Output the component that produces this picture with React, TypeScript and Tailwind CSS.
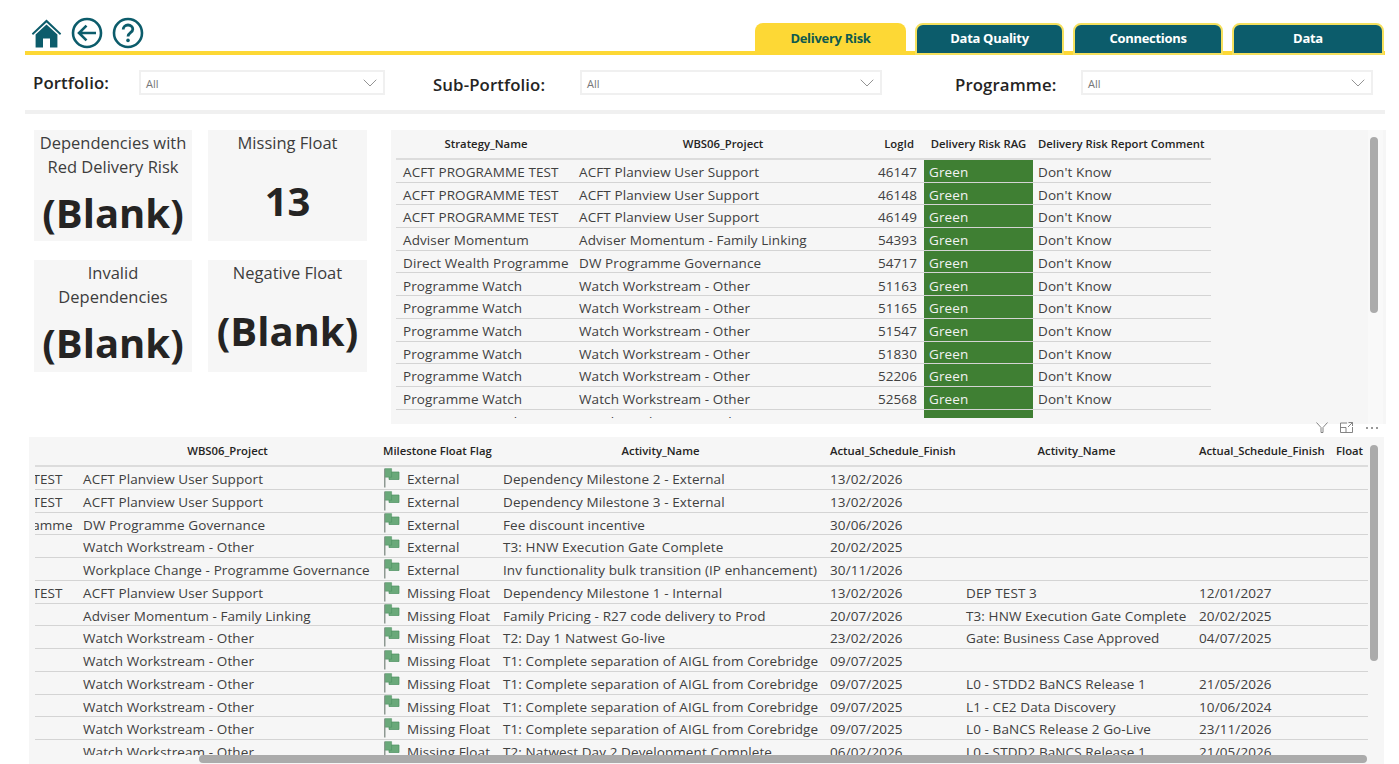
import { ChevronDown } from 'lucide-react'

const SANS = "font-['Open_Sans','Noto_Sans',sans-serif]"

const TABS = [
  { label: 'Delivery Risk', active: true, width: 'w-[151px]' },
  { label: 'Data Quality', active: false, width: 'w-[149px]' },
  { label: 'Connections', active: false, width: 'w-[150px]' },
  { label: 'Data', active: false, width: 'w-[152px]' },
]

const TOP_HEADERS = [
  { label: 'Strategy_Name', align: 'justify-center pl-[3px]' },
  { label: 'WBS06_Project', align: 'justify-center' },
  { label: 'LogId', align: 'justify-end pr-[10px]' },
  { label: 'Delivery Risk RAG', align: 'justify-center' },
  { label: 'Delivery Risk Report Comment', align: 'justify-start pl-[5px]' },
]

const TOP_ROWS = [
  ['ACFT PROGRAMME TEST', 'ACFT Planview User Support', '46147'],
  ['ACFT PROGRAMME TEST', 'ACFT Planview User Support', '46148'],
  ['ACFT PROGRAMME TEST', 'ACFT Planview User Support', '46149'],
  ['Adviser Momentum', 'Adviser Momentum - Family Linking', '54393'],
  ['Direct Wealth Programme', 'DW Programme Governance', '54717'],
  ['Programme Watch', 'Watch Workstream - Other', '51163'],
  ['Programme Watch', 'Watch Workstream - Other', '51165'],
  ['Programme Watch', 'Watch Workstream - Other', '51547'],
  ['Programme Watch', 'Watch Workstream - Other', '51830'],
  ['Programme Watch', 'Watch Workstream - Other', '52206'],
  ['Programme Watch', 'Watch Workstream - Other', '52568'],
  ['Programme Watch', 'Watch Workstream - Other', '54168'],
]

const BOTTOM_HEADERS = [
  { label: '', align: '' },
  { label: 'WBS06_Project', align: 'justify-center' },
  { label: 'Milestone Float Flag', align: 'justify-start pl-[5px]' },
  { label: 'Activity_Name', align: 'justify-center' },
  { label: 'Actual_Schedule_Finish', align: 'justify-start pl-[6px]' },
  { label: 'Activity_Name', align: 'justify-center' },
  { label: 'Actual_Schedule_Finish', align: 'justify-start pl-[6px]' },
  { label: 'Float', align: 'justify-start pl-[6px]' },
]

const BOTTOM_ROWS = [
  ['ACFT PROGRAMME TEST', 'ACFT Planview User Support', 'External', 'Dependency Milestone 2 - External', '13/02/2026', '', ''],
  ['ACFT PROGRAMME TEST', 'ACFT Planview User Support', 'External', 'Dependency Milestone 3 - External', '13/02/2026', '', ''],
  ['Direct Wealth Programme', 'DW Programme Governance', 'External', 'Fee discount incentive', '30/06/2026', '', ''],
  ['Programme Watch', 'Watch Workstream - Other', 'External', 'T3: HNW Execution Gate Complete', '20/02/2025', '', ''],
  ['Workplace', 'Workplace Change - Programme Governance', 'External', 'Inv functionality bulk transition (IP enhancement)', '30/11/2026', '', ''],
  ['ACFT PROGRAMME TEST', 'ACFT Planview User Support', 'Missing Float', 'Dependency Milestone 1 - Internal', '13/02/2026', 'DEP TEST 3', '12/01/2027'],
  ['Adviser Momentum', 'Adviser Momentum - Family Linking', 'Missing Float', 'Family Pricing - R27 code delivery to Prod', '20/07/2026', 'T3: HNW Execution Gate Complete', '20/02/2025'],
  ['Programme Watch', 'Watch Workstream - Other', 'Missing Float', 'T2: Day 1 Natwest Go-live', '23/02/2026', 'Gate: Business Case Approved', '04/07/2025'],
  ['Programme Watch', 'Watch Workstream - Other', 'Missing Float', 'T1: Complete separation of AIGL from Corebridge', '09/07/2025', '', ''],
  ['Programme Watch', 'Watch Workstream - Other', 'Missing Float', 'T1: Complete separation of AIGL from Corebridge', '09/07/2025', 'L0 - STDD2 BaNCS Release 1', '21/05/2026'],
  ['Programme Watch', 'Watch Workstream - Other', 'Missing Float', 'T1: Complete separation of AIGL from Corebridge', '09/07/2025', 'L1 - CE2 Data Discovery', '10/06/2024'],
  ['Programme Watch', 'Watch Workstream - Other', 'Missing Float', 'T1: Complete separation of AIGL from Corebridge', '09/07/2025', 'L0 - BaNCS Release 2 Go-Live', '23/11/2026'],
  ['Programme Watch', 'Watch Workstream - Other', 'Missing Float', 'T2: Natwest Day 2 Development Complete', '06/02/2026', 'L0 - STDD2 BaNCS Release 1', '21/05/2026'],
]

function HomeIcon() {
  return (
    <svg width="31" height="31" viewBox="0 0 31 31" fill="#0c5c6b">
      <path d="M15.5 1.5 L0.8 15.6 L2 17 L15.5 4.4 L29 17 L30.2 15.6 Z" />
      <path d="M15.5 6.6 L4.6 16.6 V29.5 H12 V20.5 H19 V29.5 H26.4 V16.6 Z" />
    </svg>
  )
}

function BackIcon() {
  return (
    <svg width="32" height="32" viewBox="0 0 32 32" fill="none" stroke="#0c5c6b">
      <circle cx="16" cy="16" r="14" strokeWidth="2.6" />
      <path d="M25 16 H8.5 M15.5 8.6 L8 16 L15.5 23.4" strokeWidth="2.6" />
    </svg>
  )
}

function HelpIcon() {
  return (
    <svg width="32" height="32" viewBox="0 0 32 32" fill="none" stroke="#0c5c6b">
      <circle cx="16" cy="16" r="14" strokeWidth="2.6" />
      <path d="M11.2 12.6 C11.2 9.6 13.4 8 16 8 C18.8 8 20.8 9.8 20.8 12.2 C20.8 15.6 16 15.6 16 19.4" strokeWidth="2.8" />
      <circle cx="16" cy="23.4" r="1.8" fill="#0c5c6b" stroke="none" />
    </svg>
  )
}

function FlagIcon() {
  return (
    <svg width="16" height="20" viewBox="0 0 16 20" className="-mt-[4px] shrink-0">
      <path d="M0.8 0.5 V19.5" stroke="#75837a" strokeWidth="1.2" />
      <path d="M5 4 H15 V11.5 H5 Z" fill="#6aa97a" stroke="#4a8f5f" strokeWidth="0.7" />
      <path d="M1.3 0.6 H7.6 V9.2 H1.3 Z" fill="#6aa97a" stroke="#4a8f5f" strokeWidth="0.5" />
    </svg>
  )
}

function Filter({ label, labelClass, boxClass, className = '' }: { label: string; labelClass: string; boxClass: string; className?: string }) {
  return (
    <div className={`flex items-center ${className}`}>
      <span className={`whitespace-nowrap text-[16.8px] font-semibold tracking-[0.1px] text-[#252423] ${labelClass}`}>{label}</span>
      <div className={`flex h-[25px] items-center justify-between border-2 border-[#f0f0f0] bg-white pl-[5px] pr-[1px] ${boxClass}`}>
        <span className="pt-[3px] text-[11px] text-[#777]">All</span>
        <ChevronDown size={24} strokeWidth={0.8} className="text-[#777]" />
      </div>
    </div>
  )
}

function Card({ title, value, valueClass = '', className = '' }: { title: string; value: string; valueClass?: string; className?: string }) {
  return (
    <div className={`flex flex-col items-center overflow-hidden bg-[#f6f6f6] text-center ${className}`}>
      <div className="mt-[1px] text-[16.5px] leading-[24px] text-[#3d3d3d]">{title}</div>
      <div className={`font-bold leading-none text-[#252423] ${valueClass}`}>{value}</div>
    </div>
  )
}

function TopTable() {
  return (
    <div className="relative ml-[24px] h-[294px] w-[995px] overflow-hidden bg-[#f6f6f6] pl-[5px]">
      <div className="w-[815px]">
        <div className="grid h-[30px] grid-cols-[177px_300px_51px_109px_178px] border-b-2 border-[#dcdcdc] text-[11.3px] font-semibold text-[#252423]">
          {TOP_HEADERS.map((h) => (
            <div key={h.label} className={`flex items-center whitespace-nowrap ${h.align}`}>
              {h.label}
            </div>
          ))}
        </div>
        {TOP_ROWS.map((row, i) => (
          <div
            key={i}
            className="grid h-[22.7px] grid-cols-[177px_300px_51px_109px_178px] border-b border-[#d4d4d4] text-[13.5px] leading-none tracking-[0.1px] text-[#404040]"
          >
            <div className="flex items-center whitespace-nowrap pl-[7px] pt-[4px]">{row[0]}</div>
            <div className="flex items-center whitespace-nowrap pl-[6px] pt-[4px]">{row[1]}</div>
            <div className="flex items-center justify-end pr-[7px] pt-[4px]">{row[2]}</div>
            <div className="flex items-center bg-[#3f7f33] pl-[5px] pt-[4px] text-[#f2f2f2]">Green</div>
            <div className="flex items-center pl-[5px] pt-[4px]">Don't Know</div>
          </div>
        ))}
      </div>
      <div className="absolute bottom-0 left-0 right-0 h-[6px] bg-[#f6f6f6]" />
      <div className="absolute bottom-0 right-[3px] top-0 w-[15px] bg-[#f9f9f9]" />
      <div className="absolute right-[8px] top-[7px] h-[176px] w-[8px] rounded-full bg-[#ababab]" />
    </div>
  )
}

function BottomTable() {
  return (
    <div className="relative ml-[4px] h-[327px] w-[1355px] overflow-hidden bg-[#f6f6f6] pl-[6px]">
      <div className="w-[1333px]">
        <div className="grid h-[30px] grid-cols-[42px_301px_119px_327px_136px_233px_137px_38px] border-b-2 border-[#dcdcdc] text-[11.3px] font-semibold text-[#252423]">
          {BOTTOM_HEADERS.map((h, i) => (
            <div key={i} className={`flex items-center whitespace-nowrap ${h.align}`}>
              {h.label}
            </div>
          ))}
        </div>
        {BOTTOM_ROWS.map((row, i) => (
          <div
            key={i}
            className="grid h-[22.75px] grid-cols-[42px_301px_119px_327px_136px_233px_137px_38px] border-b border-[#d4d4d4] text-[13.5px] leading-none tracking-[0.1px] text-[#404040]"
          >
            <div className="flex items-center overflow-hidden whitespace-nowrap pt-[4px]">
              <span className="-ml-[128px]">{row[0]}</span>
            </div>
            <div className="flex items-center whitespace-nowrap pl-[6px] pt-[4px]">{row[1]}</div>
            <div className="flex items-center gap-[7px] whitespace-nowrap pl-[6px] pt-[4px]">
              <FlagIcon />
              {row[2]}
            </div>
            <div className="flex items-center whitespace-nowrap pl-[6px] pt-[4px]">{row[3]}</div>
            <div className="flex items-center whitespace-nowrap pl-[6px] pt-[4px]">{row[4]}</div>
            <div className="flex items-center whitespace-nowrap pl-[6px] pt-[4px]">{row[5]}</div>
            <div className="flex items-center whitespace-nowrap pl-[6px] pt-[4px]">{row[6]}</div>
            <div />
          </div>
        ))}
      </div>
      <div className="absolute bottom-0 left-0 right-0 h-[9px] bg-[#f6f6f6]" />
      <div className="absolute bottom-[1px] left-[170px] h-[8px] w-[1168px] rounded-full bg-[#ababab]" />
      <div className="absolute right-[6px] top-[8px] h-[216px] w-[8px] rounded-full bg-[#ababab]" />
    </div>
  )
}

export default function App() {
  return (
    <div className={`h-[764px] w-[1399px] overflow-hidden bg-white ${SANS}`}>
      <div className="ml-[25px] w-[1360px]">
        <div className="flex h-[55px] items-end justify-between border-b-4 border-[#fdd835]">
          <div className="mb-[1px] ml-[6px] flex items-center gap-[9px] pb-[1px]">
            <HomeIcon />
            <BackIcon />
            <HelpIcon />
          </div>
          <div className="-mb-[4px] mr-[1px] flex gap-[9px]">
            {TABS.map((t) => (
              <div
                key={t.label}
                className={`flex h-[32px] items-center justify-center rounded-t-[8px] text-[13px] font-bold tracking-[-0.3px] ${t.width} ${
                  t.active ? 'bg-[#fdd835] text-[#0f5a4e]' : 'border-2 border-[#f5e05e] bg-[#0c5c6b] text-white'
                }`}
              >
                {t.label}
              </div>
            ))}
          </div>
        </div>

        <div className="flex h-[55px] items-center pl-[8px]">
          <Filter label="Portfolio:" labelClass="w-[106px]" boxClass="w-[246px]" />
          <Filter label="Sub-Portfolio:" labelClass="mt-[4px] w-[147px]" boxClass="w-[302px]" className="ml-[48px]" />
          <Filter label="Programme:" labelClass="mt-[4px] w-[126px]" boxClass="w-[292px]" className="ml-[73px]" />
        </div>
        <div className="h-[4px] bg-[#f0f0f0]" />
      </div>

      <div className="ml-[25px] mt-[16px] flex">
        <div className="ml-[9px] grid h-[242px] w-[333px] grid-cols-[158px_159px] grid-rows-[111px_112px] gap-x-[16px] gap-y-[19px]">
          <Card title="Dependencies with Red Delivery Risk" value="(Blank)" valueClass="mt-[14px] text-[40px]" className="px-[2px]" />
          <Card title="Missing Float" value="13" valueClass="mt-[26px] text-[40px]" />
          <Card title="Invalid Dependencies" value="(Blank)" valueClass="mt-[14px] text-[40px]" className="px-6" />
          <Card title="Negative Float" value="(Blank)" valueClass="mt-[26px] text-[40px]" />
        </div>
        <TopTable />
      </div>

      <div className="relative ml-[25px] pt-[13px]">
        <div className="absolute right-[20px] top-[-2px] flex items-center gap-[12px] text-[#777]">
          <svg width="12" height="11" viewBox="0 0 12 11" fill="none" stroke="currentColor" strokeWidth="0.9">
            <path d="M0.5 0.5 L5 5.5 V10.5 H7 V5.5 L11.5 0.5" />
          </svg>
          <svg width="13" height="11" viewBox="0 0 13 11" fill="none" stroke="currentColor" strokeWidth="0.9">
            <path d="M7 1 H0.5 V10.5 H12.5 V5 M0.5 5.5 H6 V10.5 M8.5 0.5 H12.5 V4 M12.5 0.5 L8 5" />
          </svg>
          <svg width="14" height="4" viewBox="0 0 14 4" fill="currentColor">
            <circle cx="2" cy="2" r="1" />
            <circle cx="7" cy="2" r="1" />
            <circle cx="12" cy="2" r="1" />
          </svg>
        </div>
        <BottomTable />
      </div>
    </div>
  )
}
